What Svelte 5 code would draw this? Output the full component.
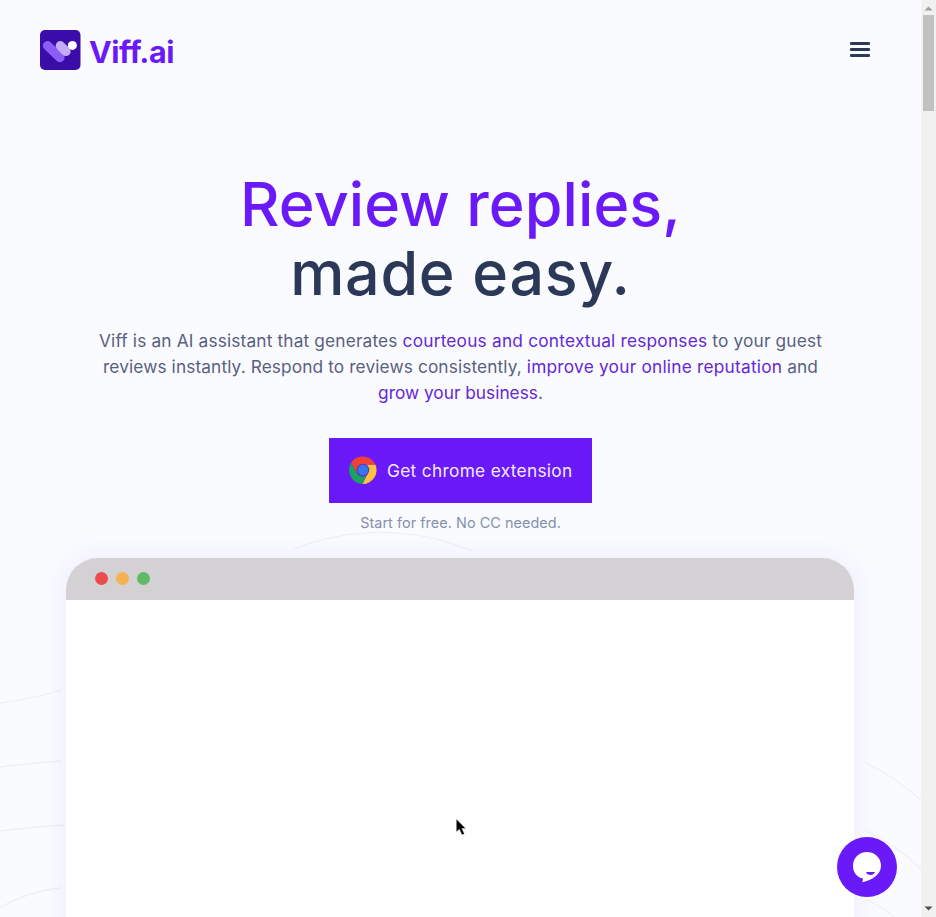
<script>
  const lights = ['#ee4b4f', '#f6b150', '#5fba66'];
</script>

<div class="screen">
  <main>
    <svg class="waves" viewBox="0 0 921 917" aria-hidden="true">
      <path d="M294 549C345 529 407 524 472 551M0 703Q32 699 61 690M0 767Q32 763 61 761M0 831Q32 827 64 825M0 908Q28 891 61 888M866 763Q895 777 921 800M866 831Q895 844 921 869M866 900Q882 906 894 917" />
    </svg>

    <header>
      <a class="brand" href="#home">
        <svg width="41" height="41" viewBox="0 0 41 41" aria-hidden="true">
          <rect x="0" y="0" width="40.5" height="40" rx="5" fill="#3b0ca8" />
          <path d="M7.5 15.7L20 27.6" stroke="#8b5cf6" stroke-width="9.3" stroke-linecap="round" />
          <path d="M20.3 15.7L26 21.4" stroke="#c4abf7" stroke-width="9.3" stroke-linecap="round" />
          <circle cx="32.4" cy="15.4" r="4.5" fill="#fff" />
        </svg>
        <span class="name">Viff.ai</span>
      </a>
      <button class="menu" aria-label="Menu"><i></i><i></i><i></i></button>
    </header>

    <section>
      <h1><span class="h-one">Review replies,</span><span class="h-two">made easy.</span></h1>
      <p class="intro">
        <span class="l1">Viff is an AI assistant that generates <b>courteous and contextual responses</b> to your guest</span>
        <span class="l2">reviews instantly. Respond to reviews consistently, <b>improve your online reputation</b> and</span>
        <span class="l3"><b>grow your business</b>.</span>
      </p>
      <a class="cta" href="#extension">
        <svg width="28" height="28" viewBox="0 0 28 28" aria-hidden="true">
          <path d="M26.4 8.4A14 14 0 0 1 13.4 28L18.9 17.1L17 8.4Z" fill="#fbc13f" />
          <path d="M1.9 7L8 17L14 8.4H26.3A14 14 0 0 0 1.9 7Z" fill="#ef4136" />
          <path d="M1.9 7L8.2 17.5Q10 20.5 14 20.5L17 20.2L13.4 28A14 14 0 0 1 1.9 7Z" fill="#1aa260" />
          <circle cx="14" cy="14" r="6.3" fill="#6033c8" />
          <circle cx="14" cy="14" r="5.2" fill="#3478ee" />
        </svg>
        <span>Get chrome extension</span>
      </a>
      <p class="note"><span>Start for free. No CC needed.</span></p>
    </section>

    <div class="browser">
      <div class="bar">
        {#each lights as color}<i style="background: {color}"></i>{/each}
      </div>
    </div>

    <svg class="cursor" width="14" height="20" viewBox="0 0 14 20" aria-hidden="true">
      <path d="M1.3 1V14L4.3 11.3L7 17L9.4 15.8L6.9 10.6H10.8Z" fill="#000" stroke="#fff" stroke-width=".4" />
    </svg>
    <button class="chat" aria-label="Open chat">
      <svg width="60" height="60" viewBox="0 0 60 60">
        <path d="M30 15C22 15 16 21 16 28.8C16 35.7 20 40.6 26 41.5L25.4 45.3C35 43.2 44 37.6 44 28.8C44 21 38 15 30 15Z" fill="#fff" />
        <path d="M29 35H38Q37 38 33.5 38T29 35Z" fill="#6a1af8" />
      </svg>
    </button>
  </main>
  <div class="scrollbar">
    <svg width="9" height="5" viewBox="0 0 9 5"><path d="M.5 4.5L4.5.5L8.5 4.5Z" fill="#a0a0a0" /></svg>
    <div class="thumb"></div>
    <svg class="down" width="9" height="5" viewBox="0 0 9 5"><path d="M.5.5L4.5 4.5L8.5.5Z" fill="#505050" /></svg>
  </div>
</div>

<style>
  :global(body) { margin: 0; }
  .screen { display: flex; width: 936px; height: 917px; overflow: hidden; font-family: Inter, "Liberation Sans", sans-serif; }
  main { position: relative; width: 921px; height: 917px; overflow: hidden; background: #f9fbff; }
  .waves { position: absolute; inset: 0; width: 921px; height: 917px; }
  .waves path { fill: none; stroke: #edf0f5; stroke-width: 1.3; }
  header { position: relative; display: flex; justify-content: space-between; align-items: flex-start; height: 70px; padding: 30px 51px 0 40px; box-sizing: border-box; }
  .brand { display: flex; gap: 8px; color: #6a1af8; text-decoration: none; }
  .name { font-size: 30.5px; font-weight: 700; line-height: 44px; letter-spacing: -.5px; white-space: nowrap; }
  .menu { display: flex; flex-direction: column; gap: 3px; margin-top: 12px; padding: 0; border: 0; background: none; width: 20.5px; }
  .menu i { height: 3px; border-radius: 1px; background: #2b3857; }
  section { position: relative; display: flex; flex-direction: column; align-items: center; padding-top: 100px; }
  h1 { margin: 0; display: flex; flex-direction: column; align-items: center; font-size: 61px; line-height: 69px; font-weight: 500; color: #2b3857; white-space: nowrap; }
  .h-one { color: #6a1af8; letter-spacing: .1px; }
  .h-two { letter-spacing: .7px; }
  .intro { display: flex; flex-direction: column; align-items: center; margin: 20px 0 0; font-size: 17.3px; line-height: 26px; color: #596080; white-space: nowrap; }
  .intro b { font-weight: 400; color: #6527d3; }
  .l1 { letter-spacing: .15px; }
  .l1 b { letter-spacing: .21px; }
  .l2 { letter-spacing: .11px; }
  .l2 b { letter-spacing: .22px; }
  .cta { display: flex; align-items: center; gap: 10px; width: 263px; height: 65px; padding: 0 0 1px 20px; margin-top: 32px; box-sizing: border-box; background: #6a1af8; color: #f4eaff; font-size: 17.3px; letter-spacing: .31px; text-decoration: none; white-space: nowrap; }
  .note { margin: 8px 0 0; font-size: 14.4px; line-height: 24px; letter-spacing: .06px; color: #8490ae; white-space: nowrap; }
  .browser { position: relative; width: 788px; height: 500px; margin: 23px 0 0 66px; border-radius: 32px 32px 0 0; background: #fffefe; box-shadow: 0 0 26px rgba(106, 26, 248, .08); overflow: hidden; }
  .bar { display: flex; align-items: center; gap: 8px; height: 42px; padding-left: 29px; background: #d3d1d3; }
  .bar i { width: 13px; height: 13px; margin-top: -1px; border-radius: 50%; }
  .cursor { position: absolute; left: 455px; top: 818px; }
  .chat { position: absolute; left: 837px; top: 837px; width: 60px; height: 60px; padding: 0; border: 0; border-radius: 50%; background: #6a1af8; }
  .chat svg { display: block; }
  .scrollbar { display: flex; flex-direction: column; align-items: center; width: 15px; height: 917px; padding: 6px 0 6px; box-sizing: border-box; background: #f1f1f1; }
  .scrollbar svg { flex: none; }
  .thumb { width: 11px; height: 96px; margin-top: 4px; background: #c1c1c1; }
  .down { margin-top: auto; }
</style>
